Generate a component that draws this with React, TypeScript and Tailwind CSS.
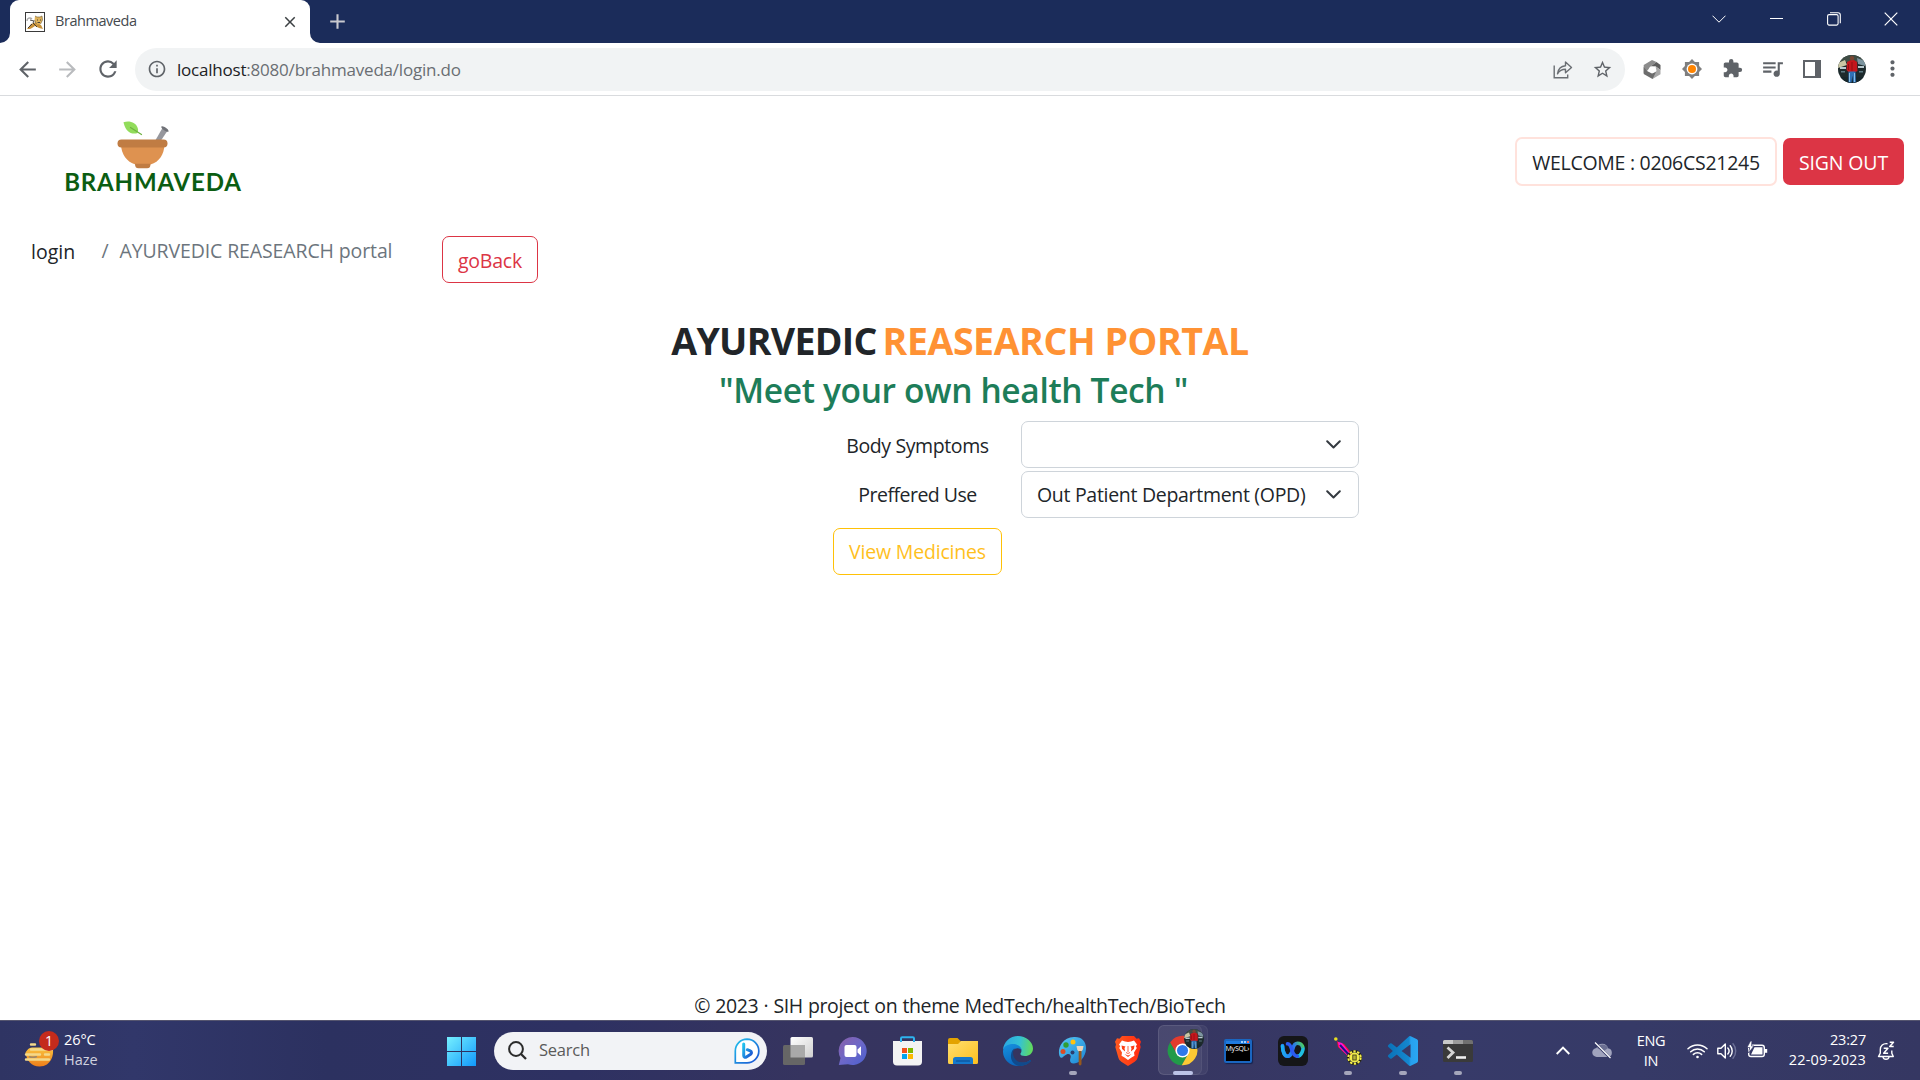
import React from "react";
import {
  MdAdd,
  MdArrowBack,
  MdArrowForward,
  MdClose,
  MdExtension,
  MdMoreVert,
  MdOutlineInfo,
  MdQueueMusic,
  MdRefresh,
  MdStarBorder,
} from "react-icons/md";

function Tomcat() {
  return (
    <svg width="20" height="20" viewBox="0 0 20 20">
      <rect x=".5" y=".5" width="19" height="19" fill="#fff" stroke="#3a3a3a" />
      <path d="M2 9c0-3 3-4 5-2" stroke="#aaa" fill="none" strokeWidth="1.4" />
      <path d="M2 17l4-5 5-2 5 3 2 4-4-1-4-2-3 2-2 1z" fill="#c8923a" />
      <path d="M10 4l2 1h3l2-1 .5 4-2 4-4 .5-2-4z" fill="#e0b35a" />
      <path d="M5 8l4 1-1 2 4 4M3 16l4-4M12 8h1M15 8h1M12.500 10.500h2.500" stroke="#333" fill="none" strokeWidth=".9" />
      <path d="M10 4l2 1h3l2-1 .5 4-2 4M9.500 8l2 4" stroke="#6b5a35" fill="none" strokeWidth=".6" />
    </svg>
  );
}

function Avatar({ className }: { className: string }) {
  return (
    <svg className={className} viewBox="0 0 28 28">
      <defs>
        <clipPath id="avatarClip">
          <circle cx="14" cy="14" r="14" />
        </clipPath>
      </defs>
      <g clipPath="url(#avatarClip)">
        <rect width="28" height="28" fill="#1d2a2c" />
        <rect width="28" height="7" fill="#3f4d45" />
        <path d="M0 8l7-3 2 5-9 3z" fill="#c9c6a4" />
        <path d="M19 3l8 3v5l-7-2z" fill="#7d95a0" />
        <path d="M2 12h6v2H2zM20 11h6v2h-6z" fill="#b9c9cf" />
        <path d="M3 16h4v1.500H3zM21 16h4v1.500h-4z" fill="#5e7a83" />
        <path d="M0 22h28v6H0z" fill="#17262a" />
        <path d="M9 7l4-2h3l3 2 .5 9-2 1h-7L8.500 15z" fill="#c4161c" />
        <path d="M14 7v9M10.500 9v6" stroke="#7e0b10" strokeWidth=".7" />
        <circle cx="14" cy="3.200" r="2.200" fill="#7a4632" />
        <path d="M10.500 16.500h7l.5 11h-3l-.7-7-.8 7h-3z" fill="#2f70b5" />
        <path d="M11.500 18v9M16.500 18v9" stroke="#9fd0f0" strokeWidth=".8" />
      </g>
    </svg>
  );
}

function BrowserChrome() {
  return (
    <header>
      <div className="flex h-[43px] items-stretch bg-[#1b2c5a]">
        <div className="relative ml-[10px] flex w-[300px] items-center rounded-t-[9px] bg-white pl-[15px] pr-[11px]">
          <svg className="absolute -left-[10px] bottom-0" width="10" height="10" viewBox="0 0 10 10">
            <path d="M10 0v10H0A10 10 0 0 0 10 0z" fill="#fff" />
          </svg>
          <svg className="absolute -right-[10px] bottom-0" width="10" height="10" viewBox="0 0 10 10">
            <path d="M0 0v10h10A10 10 0 0 1 0 0z" fill="#fff" />
          </svg>
          <Tomcat />
          <span className="mb-[2px] ml-[10px] flex-1 text-[14.5px] tracking-[-0.45px] text-[#45494e]">Brahmaveda</span>
          <MdClose size={18} color="#3c4043" />
        </div>
        <MdAdd size={25} color="#c9c9cf" className="ml-[15px] mt-[9px]" />
        <div className="ml-auto flex h-[37px] items-center text-white">
          <div className="flex w-[57.3px] justify-center">
            <svg width="14" height="8" viewBox="0 0 14 8" fill="none" stroke="currentColor" strokeWidth="1"><path d="M.5.7L7 7.200 13.500.7" /></svg>
          </div>
          <div className="flex w-[57.3px] justify-center">
            <div className="h-px w-[13px] bg-white" />
          </div>
          <div className="flex w-[57.3px] justify-center">
            <svg width="14" height="14" viewBox="0 0 14 14" fill="none" stroke="currentColor" strokeWidth="1.100"><rect x=".6" y="2.600" width="10.500" height="10.500" rx="1.500" /><path d="M3 .7h8a2.300 2.300 0 0 1 2.300 2.300v8.200" /></svg>
          </div>
          <div className="flex w-[57.3px] justify-center">
            <svg width="14" height="14" viewBox="0 0 14 14" fill="none" stroke="currentColor" strokeWidth="1.200"><path d="M.7.7l12.600 12.600M13.300.7L.7 13.300" /></svg>
          </div>
        </div>
      </div>

      <div className="flex h-[53px] items-center border-b border-[#d9dbde] bg-white pr-[8px]">
        <div className="flex w-[135px] items-center pl-[15px] text-[#5f6368]">
          <MdArrowBack size={25} />
          <MdArrowForward size={25} color="#b9bbbe" className="ml-[15px]" />
          <MdRefresh size={26} className="ml-[15px]" />
        </div>
        <div className="flex h-[43px] w-[1490px] items-center rounded-full bg-[#f1f3f4] pl-[12px] pr-[12px]">
          <MdOutlineInfo size={20} color="#5f6368" />
          <span className="ml-[10px] mt-px flex-1 text-[17px] tracking-[-0.21px] text-[#6a6e73]">
            <span className="text-[#202124]">localhost</span>:8080/brahmaveda/login.do
          </span>
          <svg width="20" height="19" viewBox="0 0 20 19" fill="none" stroke="#6a6e73" strokeWidth="1.400">
            <path d="M1.200 5.500v12.300h13.500v-3.300" />
            <path d="M4.500 13.800c.7-5 3.300-7.600 8-8V2l6 5.500-6 5.300V9.300c-3.500 0-6 1.200-8 4.500z" strokeLinejoin="round" />
          </svg>
          <MdStarBorder size={21} color="#5f6368" className="ml-[19px]" />
        </div>
        <div className="ml-auto flex items-center text-[#5f6368]">
          <div className="flex w-10 justify-center">
            <svg width="18" height="19" viewBox="0 0 18 19">
              <path d="M9 0l4.500 2-6 4.500-3 4L.7 13V5z" fill="#8c8c8c" />
              <path d="M13.500 2l4 3v5l-5-3.800L7.500 6.500z" fill="#5e5e5e" />
              <path d="M17.500 10v4.200L9.500 19l-.5-4.500 4.500-3.500-1-4.800z" fill="#a8a8a8" />
              <path d="M9.500 19L.7 14V7l3.300 4 5 2.500 4-1.500z" fill="#6d6d6d" />
              <circle cx="9" cy="9.500" r="2.900" fill="#fff" />
            </svg>
          </div>
          <div className="flex w-10 justify-center">
            <svg width="20" height="20" viewBox="0 0 20 20">
              <path d="M10 0l2.900 2.900h4.200v4.200L20 10l-2.900 2.900v4.200h-4.200L10 20l-2.900-2.900H2.900v-4.200L0 10l2.900-2.900V2.900h4.200z" fill="#7f7f7f" />
              <circle cx="10" cy="10" r="5.400" fill="#fff" />
              <circle cx="10" cy="10" r="4" fill="#ff8400" />
            </svg>
          </div>
          <div className="flex w-10 justify-center"><MdExtension size={21} className="-mt-px" /></div>
          <div className="flex w-10 justify-center"><MdQueueMusic size={25} className="-mt-px" /></div>
          <div className="flex w-10 justify-center">
            <div className="-mt-px h-[18px] w-[18px] border-2 border-r-[6px] border-[#5f6368]" />
          </div>
          <div className="flex w-10 justify-center"><Avatar className="-mt-px size-7" /></div>
          <div className="flex w-10 justify-center"><MdMoreVert size={25} className="-mt-px" /></div>
        </div>
      </div>
    </header>
  );
}

function Logo() {
  return (
    <div className="ml-[64px] mt-[25px] flex w-[178px] flex-col items-center">
      <svg width="52" height="48" viewBox="0 0 52 48" className="relative -left-[10px]">
        <path d="M38 20l8-14 5 3-8 12z" fill="#96979d" />
        <path d="M44.500 5.500c1-1.500 8 3 7 5-1 1.500-8.500-3.500-7-5z" fill="#6f7177" />
        <path d="M6.500 1.200c6-1.600 12.500-.2 14.500 6.800.3 2-.5 4-1 4.300C13 13.500 8.500 10 6.500 1.200z" fill="#92dc5b" />
        <path d="M13.500 6.500l11 7" stroke="#6fb243" strokeWidth="1.300" strokeLinecap="round" />
        <path d="M4 24h43.500c-.5 9-5 17-14 19.500h-15C9.500 41 4.500 33 4 24z" fill="#de9250" />
        <path d="M18 42.700h15.500c0 3-.8 4.600-3.500 4.600h-8.500c-2.500 0-3.500-1.600-3.500-4.600z" fill="#c07c43" />
        <rect x=".5" y="18.500" width="50" height="8" rx="4" fill="#c07c43" />
      </svg>
      <span className="-mt-[2px] whitespace-nowrap font-['Lato'] text-[24px] leading-[29px] font-bold tracking-[0.85px] text-[#0b5d12]">BRAHMAVEDA</span>
    </div>
  );
}

function Select({ value }: { value: string }) {
  return (
    <div className="flex h-[47px] w-[338px] items-center justify-between rounded-[7px] border border-[#ced4da] pl-[15px] pr-[17px]">
      <span className="whitespace-nowrap tracking-[-0.3px]">{value}</span>
      <svg width="15" height="9" viewBox="0 0 15 9" fill="none" stroke="#343a40" strokeWidth="2" strokeLinecap="round" strokeLinejoin="round"><path d="M1.200 1.200l6.300 6.300 6.300-6.300" /></svg>
    </div>
  );
}

function Page() {
  return (
    <main className="flex h-[924px] flex-col bg-white text-[19.5px] leading-[30px] text-[#212529]">
      <div className="flex h-[140px] items-start">
        <Logo />
        <div className="ml-auto mr-[16px] mt-[41px] flex items-center gap-[6px]">
          <div className="h-[49px] w-[262px] rounded-[7px] border-2 border-[#ffe2dc] pt-[9px] text-center tracking-[-0.28px]">WELCOME : 0206CS21245</div>
          <div className="h-[47px] w-[121px] rounded-[7px] bg-[#dc3545] pt-[10px] text-center tracking-[-0.15px] text-white">SIGN OUT</div>
        </div>
      </div>

      <div className="flex h-[47px] items-start">
        <span className="ml-[31px] mt-px w-[70.5px] tracking-[0px]">login</span>
        <span className="w-[18px] text-[#6c757d]">/</span>
        <span className="w-[322.5px] tracking-[-0.12px] text-[#6c757d]">AYURVEDIC REASEARCH portal</span>
        <span className="h-[47px] w-[96px] rounded-[7px] border border-[#dc3545] pt-[9px] text-center tracking-[-0.2px] text-[#dc3545]">goBack</span>
      </div>

      <h1 className="mt-[35px] flex justify-center gap-[6px] text-[37.5px] leading-[46px] font-bold">
        <span className="tracking-[-0.72px]">AYURVEDIC</span>
        <span className="tracking-[-0.44px] text-[#ff9234]">REASEARCH PORTAL</span>
      </h1>
      <h2 className="mt-[6px] mr-[13px] text-center text-[33.5px] leading-[40px] font-semibold tracking-[-0.35px] text-[#1d7d59]">"Meet your own health Tech "</h2>

      <div className="mt-[11px] ml-[833px] grid grid-cols-[169px_338px] gap-x-[19px] gap-y-[3px]">
        <span className="mt-[10px] text-center tracking-[-0.4px]">Body Symptoms</span>
        <Select value="" />
        <span className="mt-[9px] text-center tracking-[-0.52px]">Preffered Use</span>
        <Select value="Out Patient Department (OPD)" />
        <span className="mt-[7px] h-[47px] rounded-[7px] border border-[#ffc107] pt-[8px] text-center tracking-[-0.18px] text-[#ffc01e]">View Medicines</span>
      </div>

      <footer className="relative top-px mt-auto text-center tracking-[-0.36px] [word-spacing:0.4px]">© 2023 · SIH project on theme MedTech/healthTech/BioTech</footer>
    </main>
  );
}

function Weather() {
  return (
    <div className="flex w-[447px] items-center pb-[2px] pl-[24px] text-[14.5px] leading-[20px] text-white">
      <div className="relative">
        <svg width="34" height="38" viewBox="0 0 34 38">
          <defs>
            <linearGradient id="sun" x1="0" y1="0" x2="0" y2="1"><stop offset="0" stopColor="#f9c440" /><stop offset="1" stopColor="#ee7e1a" /></linearGradient>
          </defs>
          <path d="M1.500 21.500C3 19 5 16.500 8 16.500h20.500c2 6-1 19-13 19-8 0-13-6-14-14z" fill="url(#sun)" />
          <path d="M5 25.500c2 1 4 1.500 8 0" stroke="#a08a6a" strokeWidth="1.500" fill="none" />
          <g stroke="#f3d98b" strokeWidth="2.400" strokeLinecap="round">
            <path d="M7 13.500h4M7 18.500h21M2 23.500h14M21 23.500h4M2 28.500h23" />
          </g>
        </svg>
        <span className="absolute left-[15px] top-0 flex size-5 items-center justify-center rounded-full bg-[#c42b1c] text-[14px]">1</span>
      </div>
      <div className="ml-[6px]">
        <div className="tracking-[-0.1px]">26°C</div>
        <div className="text-[#cfd1df]">Haze</div>
      </div>
    </div>
  );
}

function Slot({ children, open, active }: { children: React.ReactNode; open?: boolean; active?: boolean }) {
  return (
    <div className="relative flex h-[59px] w-[55px] items-center justify-center">
      {active && <span className="absolute left-[3px] top-[4px] h-[50px] w-[50px] rounded-[6px] border border-white/5 bg-white/5" />}
      {active && <span className="absolute left-[3px] top-[4px] h-[50px] w-[44px] rounded-[6px] border border-white/5 bg-white/5" />}
      <div className="relative">{children}</div>
      {open && <span className="absolute bottom-[5px] left-[23.500px] h-1 w-2 rounded-full bg-[#a5a6bb]" />}
      {active && <span className="absolute bottom-[5px] left-[18px] h-1 w-5 rounded-full bg-[#bcc3e6]" />}
    </div>
  );
}

function TaskbarApps() {
  return (
    <div className="ml-[3px] flex">
      <Slot>
        <svg width="30" height="28" viewBox="0 0 30 28">
          <defs><linearGradient id="tv" x1="0" y1="0" x2="1" y2="1"><stop offset="0" stopColor="#fff" /><stop offset="1" stopColor="#cfcfcf" /></linearGradient></defs>
          <rect x="7.500" width="22.500" height="20.500" rx="1.500" fill="url(#tv)" />
          <rect y="8" width="22" height="20" rx="1.500" fill="#666666" />
          <rect x="7.500" y="8" width="14.500" height="12.500" fill="#a9a9a9" />
        </svg>
      </Slot>
      <Slot>
        <svg width="29" height="28" viewBox="0 0 29 28">
          <defs><linearGradient id="chat" x1="0" y1="0" x2="1" y2="1"><stop offset="0" stopColor="#8b5fa8" /><stop offset=".5" stopColor="#6d68c8" /><stop offset="1" stopColor="#4a5fd0" /></linearGradient></defs>
          <path d="M14.500 0a14 14 0 1 1-4.500 27.200L.8 28l1.700-7A14 14 0 0 1 14.500 0z" fill="url(#chat)" />
          <rect x="6.500" y="8" width="12" height="12" rx="2" fill="#fff" />
          <path d="M19.500 12.500l3.500-3.300v9.600l-3.500-3.300z" fill="#fff" />
        </svg>
      </Slot>
      <Slot>
        <svg width="29" height="30" viewBox="0 0 29 30">
          <path d="M8 7V2.500C8 1.700 8.500 1.200 9.200 1.200h10.600c.7 0 1.200.5 1.200 1.300V7" fill="none" stroke="#2eb3ee" strokeWidth="2" />
          <path d="M0 5h29v20.500a4 4 0 0 1-4 4H4a4 4 0 0 1-4-4z" fill="#f3f3f3" />
          <path d="M8 5V6M21 5V6" stroke="#2eb3ee" strokeWidth="2" />
          <path d="M9 12h5v5H9z" fill="#f1511b" /><path d="M15 12h5v5h-5z" fill="#80b900" />
          <path d="M9 18h5v5H9z" fill="#00a4ef" /><path d="M15 18h5v5h-5z" fill="#fbb900" />
        </svg>
      </Slot>
      <Slot>
        <svg width="30" height="26" viewBox="0 0 30 26">
          <defs><linearGradient id="fold" x1="0" y1="0" x2="1" y2="1"><stop offset="0" stopColor="#ffdf70" /><stop offset="1" stopColor="#fdbf1e" /></linearGradient></defs>
          <path d="M0 2a2 2 0 0 1 2-2h7.500l3.500 3.500V8H0z" fill="#e3a300" />
          <path d="M0 6h10l3-3h17v21.500a1.500 1.500 0 0 1-1.500 1.500h-27A1.500 1.500 0 0 1 0 24.500z" fill="url(#fold)" />
          <path d="M5 26v-4.500A2.500 2.500 0 0 1 7.500 19h15a2.500 2.500 0 0 1 2.500 2.500V26z" fill="#1679cc" />
          <path d="M8.500 23h13" stroke="#0a4a8c" strokeWidth="1.200" strokeLinecap="round" />
        </svg>
      </Slot>
      <Slot>
        <svg width="30" height="30" viewBox="0 0 30 30">
          <defs>
            <linearGradient id="e1" x1="0" y1=".3" x2="1" y2=".4"><stop offset="0" stopColor="#2aa6e2" /><stop offset=".55" stopColor="#34c2d5" /><stop offset="1" stopColor="#62da5a" /></linearGradient>
            <linearGradient id="e2" x1="0" y1="0" x2=".5" y2="1"><stop offset="0" stopColor="#1692e0" /><stop offset="1" stopColor="#0b62b8" /></linearGradient>
          </defs>
          <path d="M0 14C.5 6 7 0 15 0s15 6 15 12.500c0 5-4 7.500-8 7.500-3.500 0-5-1.200-4.500-2.500C20 14 17.500 10 12 10 6 10 1 11.500 0 14z" fill="url(#e1)" />
          <path d="M0 15C.5 10 5 8 10 8c5.500 0 9 3.500 9 7.500 0-3-6-5-9-1-2.500 4 0 9.500 4.500 11.500 4 1.500 9 1 12-1.500.7-.5 1.500 0 1 .8C25 28.500 20 30 15 30 7 30-.3 23.500 0 15z" fill="url(#e2)" />
          <path d="M12 12c-4 4-1.500 11 3 13.500 4 1.800 9 1 12-1.300.7-.5 1.500 0 1 .8C25.500 28.500 20.500 30 16 30 10 28.500 7.500 23.500 8 19c.3-3.500 2-6 4-7z" fill="#114a8b" />
        </svg>
      </Slot>
      <Slot open>
        <svg width="29" height="30" viewBox="0 0 29 30">
          <defs><linearGradient id="pal" x1="0" y1="0" x2="1" y2="1"><stop offset="0" stopColor="#58c8f4" /><stop offset="1" stopColor="#1a86d6" /></linearGradient></defs>
          <path d="M16 1C24 .5 28.500 6 28 13c-.5 8-6 14-12 14.500-4 .3-4.500-3-3.500-5.500 1-3-1-5-4-3.500-3 1.500-4 4-6 3C-1 18 .5 2 16 1z" fill="url(#pal)" />
          <circle cx="8" cy="9" r="2.700" fill="#2f9e33" /><circle cx="15" cy="6" r="2.500" fill="#ffc20e" /><circle cx="5" cy="15.500" r="2.500" fill="#dc4b23" /><circle cx="14.500" cy="16.500" r="2" fill="#2a3f71" />
          <path d="M18.500 10h7l-.8 4-1.400 1.500h-2.600L19.300 14z" fill="#e9d5bd" />
          <path d="M20.700 15h2.800v13a1.400 1.400 0 0 1-2.800 0z" fill="#96581c" />
        </svg>
      </Slot>
      <Slot>
        <svg width="26" height="30" viewBox="0 0 26 30">
          <defs><linearGradient id="brave" x1="0" y1="0" x2="1" y2="0"><stop offset="0" stopColor="#ff5a1f" /><stop offset="1" stopColor="#ff2a10" /></linearGradient></defs>
          <path d="M7 0h12l2.500 2.700 2.500-.4 2 3.500-1 2.700.7 2.500-3 10.500c-.5 2-1.500 3-3 4.200L13 30l-6.700-4.300c-1.500-1.200-2.500-2.200-3-4.200L.3 11 1 8.500 0 5.800l2-3.500 2.500.4z" fill="url(#brave)" />
          <path d="M13 6l3-.6 3-.9 3 4-1.200 1.700 1 1.800-2.800 4.500.5 3.200-3 1.700L13 24l-3.500-2.600-3-1.700.5-3.200L4.200 12l1-1.800L4 8.500l3-4 3 .9z" fill="#fff" />
          <path d="M6.500 9.500l4 1-1 1.500.6 3.500-3-2.500zM19.500 9.500l-4 1 1 1.500-.6 3.500 3-2.500zM9.500 18l3.500 1.500 3.500-1.500-3.500 3z" fill="#fb3f15" />
          <path d="M13 10v6M11 16.500l2 1 2-1" stroke="#fb3f15" strokeWidth=".8" fill="none" />
        </svg>
      </Slot>
      <Slot active>
        <svg width="31" height="31" viewBox="1 1 46 46">
          <path d="M24 14H43.600A22 22 0 0 0 5.550 12L15.340 29 24 24z" fill="#e33b2e" />
          <path d="M15.340 29L5.550 12A22 22 0 0 0 22.850 46L32.660 29 24 24z" fill="#229a49" />
          <path d="M32.660 29L22.850 46A22 22 0 0 0 43.600 14H24V24z" fill="#fcc934" />
          <circle cx="24" cy="24" r="10.500" fill="#fff" />
          <circle cx="24" cy="24" r="8.200" fill="#2f78ea" />
        </svg>
        <span className="absolute -top-[6px] left-[17px]"><Avatar className="size-5" /></span>
      </Slot>
      <Slot>
        <div className="flex h-[24px] w-[28px] flex-col overflow-hidden rounded-[2px] border-2 border-[#1a66c0] bg-black shadow-[1px_1px_1px_#14234f]">
          <div className="flex h-[3px] shrink-0 justify-end gap-px bg-[#1e7be0] pr-px"><i className="size-[2px] bg-[#9fd0ff]" /><i className="size-[2px] bg-[#9fd0ff]" /><i className="size-[2px] bg-[#ff6a55]" /></div>
          <span className="whitespace-nowrap text-[7px] leading-[9px] tracking-[-0.2px] text-white">MySQL›</span>
        </div>
      </Slot>
      <Slot>
        <svg width="30" height="30" viewBox="0 0 30 30">
          <defs>
            <linearGradient id="wx1" gradientUnits="userSpaceOnUse" x1="3" y1="0" x2="20" y2="0"><stop offset="0" stopColor="#1ab4f0" /><stop offset="1" stopColor="#2a5cf0" /></linearGradient>
            <linearGradient id="wx2" gradientUnits="userSpaceOnUse" x1="8" y1="16" x2="25" y2="7"><stop offset="0" stopColor="#2a50e8" /><stop offset=".55" stopColor="#2a7ae8" /><stop offset="1" stopColor="#4fd65a" /></linearGradient>
          </defs>
          <rect width="30" height="30" rx="6" fill="#151618" />
          <path d="M24.500 11c1.500 1.500-1 9.300-5 9.300" fill="none" stroke="#20c0e0" strokeWidth="3.600" strokeLinecap="round" />
          <path d="M4.500 9.500c0 6 2 10.800 5 10.800s4.500-4 5.500-8c.9-3.500 2.500-5 4.500-5s4 1 5 3" fill="none" stroke="url(#wx2)" strokeWidth="3.600" strokeLinecap="round" />
          <path d="M4.500 10c.3 6 2.300 10.300 5 10.300 1.500 0 2.700-1 3.500-2.500" fill="none" stroke="url(#wx1)" strokeWidth="3.600" strokeLinecap="round" />
          <path d="M9.500 7.800c2.500.2 3.500 3 4.500 6.500s2.500 6 5.500 6" fill="none" stroke="#2b5bf0" strokeWidth="3.600" strokeLinecap="round" />
        </svg>
      </Slot>
      <Slot open>
        <svg width="28" height="28" viewBox="0 0 28 28">
          <path d="M1 1l3 4 6 2 9 11-3 3L4 10 3 4z" fill="#ff1030" />
          <path d="M4 5l4 1 10 13-3 1L5 10z" fill="#ff10d8" />
          <path d="M6 8l10 11" stroke="#1b1282" strokeWidth="2" />
          <circle cx="1.800" cy="2" r="1.800" fill="#e8e020" />
          <circle cx="20.500" cy="20.500" r="6.400" fill="none" stroke="#1e1e10" strokeWidth="2.400" />
          <circle cx="20.500" cy="20.500" r="6.200" fill="none" stroke="#f3ee4a" strokeWidth="2" strokeDasharray="2.400 1.500" />
          <circle cx="20.500" cy="20.500" r="5" fill="#f3ee4a" />
          <rect x="18.800" y="18" width="3.400" height="5" fill="#b7b23a" stroke="#3a3a14" strokeWidth=".8" />
        </svg>
      </Slot>
      <Slot open>
        <svg width="30" height="30" viewBox="0 0 24 24">
          <defs><linearGradient id="vs" x1="0" y1="0" x2="1" y2="0"><stop offset="0" stopColor="#0a72b8" /><stop offset=".7" stopColor="#1588d0" /><stop offset=".76" stopColor="#27a0ee" /><stop offset="1" stopColor="#2aa7f3" /></linearGradient></defs>
          <path fill="url(#vs)" d="M23.150 2.587L18.210.21a1.494 1.494 0 0 0-1.705.29l-9.460 8.630-4.120-3.128a.999.999 0 0 0-1.276.057L.327 7.261A1 1 0 0 0 .326 8.740L3.899 12 .326 15.260a1 1 0 0 0 .001 1.479L1.650 17.940a.999.999 0 0 0 1.276.057l4.120-3.128 9.460 8.630a1.492 1.492 0 0 0 1.704.290l4.942-2.377A1.500 1.500 0 0 0 24 20.060V3.939a1.500 1.500 0 0 0-.85-1.352zm-5.146 14.861L10.826 12l7.178-5.448v10.896z" />
        </svg>
      </Slot>
      <Slot open>
        <svg width="30" height="22" viewBox="0 0 30 22">
          <rect width="30" height="22" rx="1.500" fill="#3a3a3a" />
          <path d="M0 1.500A1.500 1.500 0 0 1 1.500 0H10v4H0z" fill="#c9c9c9" /><path d="M10 0h10v4H10z" fill="#9b9b9b" /><path d="M20 0h8.500A1.500 1.500 0 0 1 30 1.500V4H20z" fill="#707070" />
          <path d="M4.500 7.500l5.500 5-5.500 5.500" fill="none" stroke="#d5d5d5" strokeWidth="2.800" />
          <path d="M13 17.500h10" stroke="#efefef" strokeWidth="2.600" />
        </svg>
      </Slot>
    </div>
  );
}

function Tray() {
  return (
    <div className="ml-auto flex items-center text-white">
      <svg width="14" height="9" viewBox="0 0 14 9" fill="none" stroke="#fff" strokeWidth="1.900"><path d="M.7 8L7 1.700 13.300 8" /></svg>
      <svg className="ml-[22px]" width="21" height="17" viewBox="0 0 21 17">
        <path d="M5 15a4.500 4.500 0 0 1-.5-9A6 6 0 0 1 16 6.200 4.500 4.500 0 0 1 16.500 15z" fill="#a0a3bd" />
        <path d="M5 6a6 6 0 0 1 11 0l-4 3z" fill="#6b6f92" />
        <path d="M3 1l15 15" stroke="#2f3463" strokeWidth="2.400" /><path d="M3 .5l15.500 15.500" stroke="#fff" strokeWidth="1.300" />
      </svg>
      <div className="ml-[22px] w-[32px] text-center text-[14.5px] leading-[20px] tracking-[-0.3px]">
        <div>ENG</div>
        <div>IN</div>
      </div>
      <svg className="ml-[20px]" width="21" height="16" viewBox="0 0 21 16" fill="none" stroke="#fff" strokeWidth="1.500" strokeLinecap="round">
        <path d="M1 5.800a13.500 13.500 0 0 1 19 0M3.700 8.700a9.700 9.700 0 0 1 13.600 0M6.400 11.400a6 6 0 0 1 8.200 0" />
        <circle cx="10.500" cy="14" r="1.300" fill="#fff" stroke="none" />
      </svg>
      <svg className="ml-[9px]" width="21" height="18" viewBox="0 0 21 18" fill="none" stroke="#fff" strokeWidth="1.400" strokeLinejoin="round" strokeLinecap="round">
        <path d="M.8 6.300h3.200L8.300 2v14L4 11.700H.8z" />
        <path d="M10.800 6a4.500 4.500 0 0 1 0 6M13.200 3.700a8 8 0 0 1 0 10.600" />
        <path d="M16 1.800a11 11 0 0 1 0 14.400" stroke="#6d7197" />
      </svg>
      <svg className="mb-[3px] ml-[9px]" width="21" height="17" viewBox="0 0 21 17">
        <rect x="1.700" y="4.200" width="15.600" height="11.300" rx="2.300" fill="none" stroke="#fff" strokeWidth="1.400" />
        <path d="M7.500 6.200h8v7.300H4z" fill="#fff" />
        <path d="M18 8h2.200v3.800H18z" fill="#fff" />
        <path d="M3.500 0L0 6.500h2.700L1.500 12 7 5H4.500L5 0z" fill="#fff" stroke="#363a66" strokeWidth=".7" />
      </svg>
      <div className="w-[98px] pb-[2px] text-right text-[14.5px] leading-[20px]">
        <div className="tracking-[-0.2px]">23:27</div>
        <div className="tracking-[0.15px]">22-09-2023</div>
      </div>
      <svg className="ml-[11px] mr-[24px]" width="19" height="20" viewBox="0 0 19 20" fill="none" stroke="#fff" strokeWidth="1.400" strokeLinejoin="round">
        <path d="M10.500 2.700C6 2 3.300 5 3.300 8.500v3.700L1.500 15.500h14.800l-1.500-3.300V9.500" />
        <path d="M6 16c.5 3 5.500 3 6 0" />
        <path d="M6.700 7.300h4.200l-4.200 5h4.400M12.700 1.200h3.800l-3.800 4.300h4" strokeWidth="1.500" />
      </svg>
    </div>
  );
}

function Taskbar() {
  return (
    <div className="flex h-[60px] items-center border-t border-[#55556f] bg-[linear-gradient(90deg,#2f3463_0%,#31376a_7%,#2c3160_17%,#2e3162_30%,#36345f_42%,#36355f_58%,#373a69_75%,#363a67_85%,#353762_100%)]">
      <Weather />
      <svg width="29" height="29" viewBox="0 0 29 29" className="-mb-px">
        <defs><linearGradient id="win" x1="0" y1="0" x2="1" y2="1"><stop offset="0" stopColor="#76f0ff" /><stop offset="1" stopColor="#1198fb" /></linearGradient></defs>
        <path d="M0 0h14v14H0zM15 0h14v14H15zM0 15h14v14H0zM15 15h14v14H15z" fill="url(#win)" />
      </svg>
      <div className="ml-[18px] flex h-[38px] w-[273px] items-center rounded-full bg-[#f2f3f6] pl-[14px] pr-[7px]">
        <svg width="19" height="19" viewBox="0 0 19 19" fill="none" stroke="#2b2b2b" strokeWidth="2"><circle cx="8" cy="8" r="6.900" /><path d="M13 13l5 5" strokeWidth="2.300" /></svg>
        <span className="ml-[12px] flex-1 text-[16.5px] tracking-[-0.25px] text-[#5a5a5a]">Search</span>
        <svg width="26" height="26" viewBox="0 0 26 26">
          <defs><linearGradient id="bing" x1="0" y1="0" x2="1" y2="1"><stop offset="0" stopColor="#22c3ee" /><stop offset="1" stopColor="#1b4fd0" /></linearGradient></defs>
          <path d="M13 1.200a11.800 11.800 0 1 1 0 23.600H1.300V13A11.800 11.800 0 0 1 13 1.200z" fill="#fff" stroke="url(#bing)" strokeWidth="1.700" />
          <path d="M9.700 6v11.500c0 1.600 1.400 2.200 2.600 1.400l4.300-2.700c1.400-1 1-2.700-.4-3.300l-2.900-1.200" fill="none" stroke="url(#bing)" strokeWidth="3" strokeLinecap="round" strokeLinejoin="round" />
        </svg>
      </div>
      <TaskbarApps />
      <Tray />
    </div>
  );
}

export default function App() {
  return (
    <div className="h-[1080px] w-[1920px] overflow-hidden bg-white font-['Open_Sans',sans-serif]">
      <BrowserChrome />
      <Page />
      <Taskbar />
    </div>
  );
}
